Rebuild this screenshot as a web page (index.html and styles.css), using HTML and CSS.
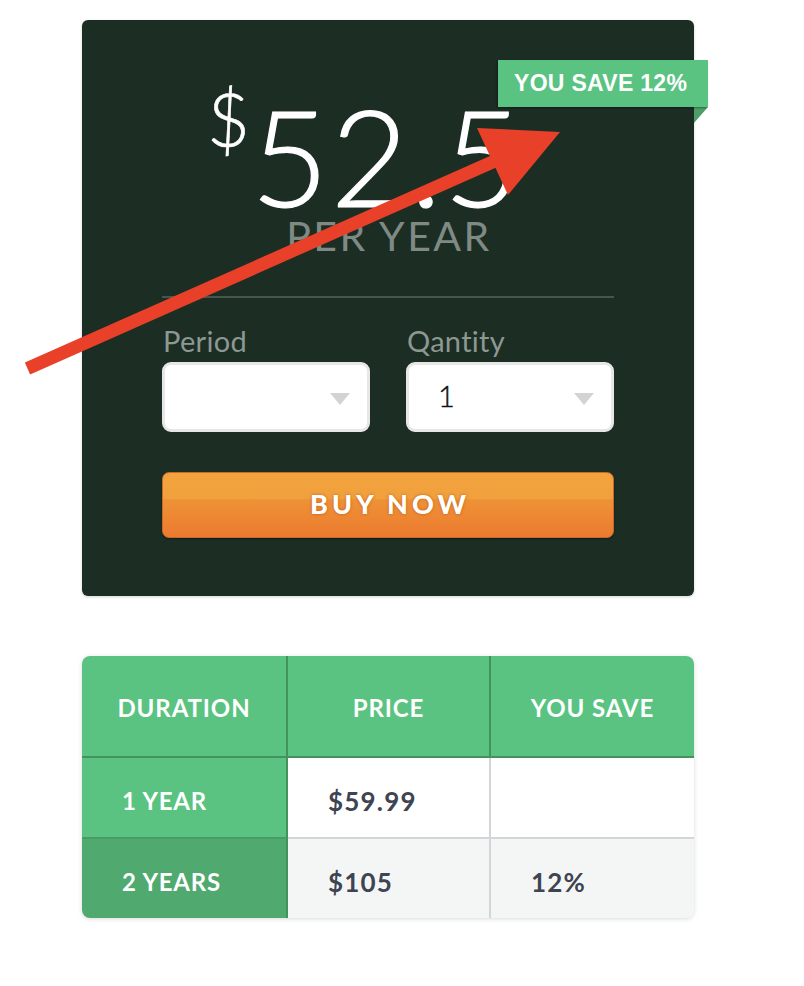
FILE: index.html
```html
<!DOCTYPE html>
<html>
<head>
<meta charset="utf-8">
<link rel="stylesheet" href="styles.css">
</head>
<body>
<div class="page">
  <div class="card">
    <div class="badge">YOU SAVE 12%</div>
    <div class="badge-fold"></div>
    <div class="price-row">
      <span class="currency">$</span>
      <span class="amount">52.5</span>
    </div>
    <div class="per">PER YEAR</div>
    <div class="divider"></div>
    <div class="fields">
      <div class="field">
        <div class="label">Period</div>
        <div class="select"><span class="value"></span><span class="caret"></span></div>
      </div>
      <div class="field">
        <div class="label">Qantity</div>
        <div class="select"><span class="value">1</span><span class="caret"></span></div>
      </div>
    </div>
    <div class="buy">BUY NOW</div>
  </div>

  <div class="table">
    <div class="cell th c1">DURATION</div>
    <div class="cell th c2">PRICE</div>
    <div class="cell th c3">YOU SAVE</div>

    <div class="cell td r1 c1 dur">1 YEAR</div>
    <div class="cell td r1 c2">$59.99</div>
    <div class="cell td r1 c3"></div>

    <div class="cell td r2 c1 dur">2 YEARS</div>
    <div class="cell td r2 c2">$105</div>
    <div class="cell td r2 c3">12%</div>
  </div>
</div>

<svg class="annotation" width="804" height="986" viewBox="0 0 804 986">
  <line x1="27.5" y1="368.5" x2="497" y2="160" stroke="#e9402a" stroke-width="13"/>
  <polygon points="560,132 477,128 508,195" fill="#e9402a"/>
</svg>
</body>
</html>
```

FILE: styles.css
```css
* { box-sizing: border-box; }
html, body { margin: 0; padding: 0; background: #ffffff; }
body { font-family: Lato, "Open Sans", sans-serif; width: 804px; height: 986px; position: relative; overflow: hidden; }

.page { padding: 20px 0 0 82px; }

.card {
  position: relative;
  width: 612px;
  height: 576px;
  background: #1c2d24;
  border-radius: 6px;
  box-shadow: 0 1px 3px rgba(0,0,0,0.18);
  padding: 70px 80px 0 80px;
}

.badge {
  position: absolute;
  left: 416px;
  top: 40px;
  width: 210px;
  height: 47px;
  background: #5ac381;
  color: #ffffff;
  font-family: "Liberation Sans", Arial, sans-serif;
  font-weight: bold;
  font-size: 23px;
  letter-spacing: 0.3px;
  line-height: 47px;
  padding-left: 16px;
  box-shadow: -1px 1px 2px rgba(0,0,0,0.35);
  z-index: 1;
}
.badge-fold {
  position: absolute;
  left: 612px;
  top: 87px;
  width: 0;
  height: 0;
  border-top: 16px solid #4c9f69;
  border-right: 14px solid transparent;
}

.price-row {
  display: flex;
  align-items: flex-start;
  padding-left: 45px;
  height: 132px;
  color: #ffffff;
}
.currency {
  font-weight: 300;
  font-size: 74px;
  line-height: 74px;
  margin-top: -8px;
  margin-right: 1px;
  -webkit-text-stroke: 0.6px #ffffff;
}
.amount {
  font-weight: 300;
  font-size: 134px;
  line-height: 132px;
  letter-spacing: 2px;
  -webkit-text-stroke: 1.2px #ffffff;
}

.per {
  margin-top: -6px;
  text-align: center;
  font-size: 41px;
  line-height: 40px;
  font-weight: 400;
  color: #7f8a85;
  letter-spacing: 2.5px;
  padding-left: 2px;
}

.divider {
  margin-top: 40px;
  height: 2px;
  background: #46564e;
}

.fields {
  margin-top: 28px;
  display: grid;
  grid-template-columns: 1fr 1fr;
  column-gap: 36px;
}
.label {
  font-size: 29px;
  line-height: 29px;
  color: #8d9893;
  height: 36px;
  padding-left: 1px;
  letter-spacing: 0.3px;
}
.select {
  height: 70px;
  background: #ffffff;
  border: 3px solid #e7e7e7;
  border-radius: 9px;
  display: flex;
  align-items: center;
  justify-content: space-between;
  padding: 0 17px 0 29px;
}
.value {
  font-size: 29px;
  font-weight: 300;
  -webkit-text-stroke: 0.4px #111111;
  color: #111111;
  line-height: 28px;
  margin-top: -2px;
}
.caret {
  width: 0;
  height: 0;
  border-left: 10px solid transparent;
  border-right: 10px solid transparent;
  border-top: 12px solid #d3d3d3;
  margin-top: 4px;
}

.buy {
  margin-top: 40px;
  height: 66px;
  border: 1px solid #c8682a;
  border-radius: 7px;
  background: linear-gradient(#f2a33e 0%, #f0a03c 40%, #ee9236 42%, #ec7a30 100%);
  color: #ffffff;
  font-weight: 900;
  font-size: 27px;
  letter-spacing: 4px;
  text-align: center;
  line-height: 62px;
  padding-left: 4px;
  text-shadow: 0 0 3px rgba(170,70,10,0.7);
  box-shadow: 0 1px 2px rgba(0,0,0,0.4);
}

.table {
  margin-top: 60px;
  width: 612px;
  display: grid;
  grid-template-columns: 206px 203px 203px;
  border-radius: 8px;
  overflow: hidden;
  box-shadow: 0 1px 4px rgba(0,0,0,0.15);
}
.cell {
  display: flex;
  align-items: center;
  font-weight: 700;
}
.th {
  height: 102px;
  background: #5ac381;
  color: #ffffff;
  justify-content: center;
  font-size: 24px;
  letter-spacing: 0.9px;
  border-bottom: 2px solid #44935f;
  padding-top: 2px;
}
.th.c1, .th.c2 { border-right: 2px solid #44935f; }

.td {
  font-size: 26px;
  letter-spacing: 1.2px;
  color: #3e4451;
  padding-left: 40px;
  padding-top: 6px;
}
.r1 { height: 81px; background: #ffffff; border-bottom: 2px solid #d3d6d9; }
.r2 { height: 79px; background: #f4f6f6; }
.td.c1 { border-right: 2px solid #44935f; }
.td.c2 { border-right: 2px solid #d3d6d9; }
.dur { color: #ffffff; font-size: 24px; letter-spacing: 0.8px; padding-left: 40px; }
.r1.dur { background: #5ac381; border-bottom: 2px solid #4a9b66; }
.r2.dur { background: #50a96e; }

.annotation {
  position: absolute;
  left: 0;
  top: 0;
  pointer-events: none;
}
```
